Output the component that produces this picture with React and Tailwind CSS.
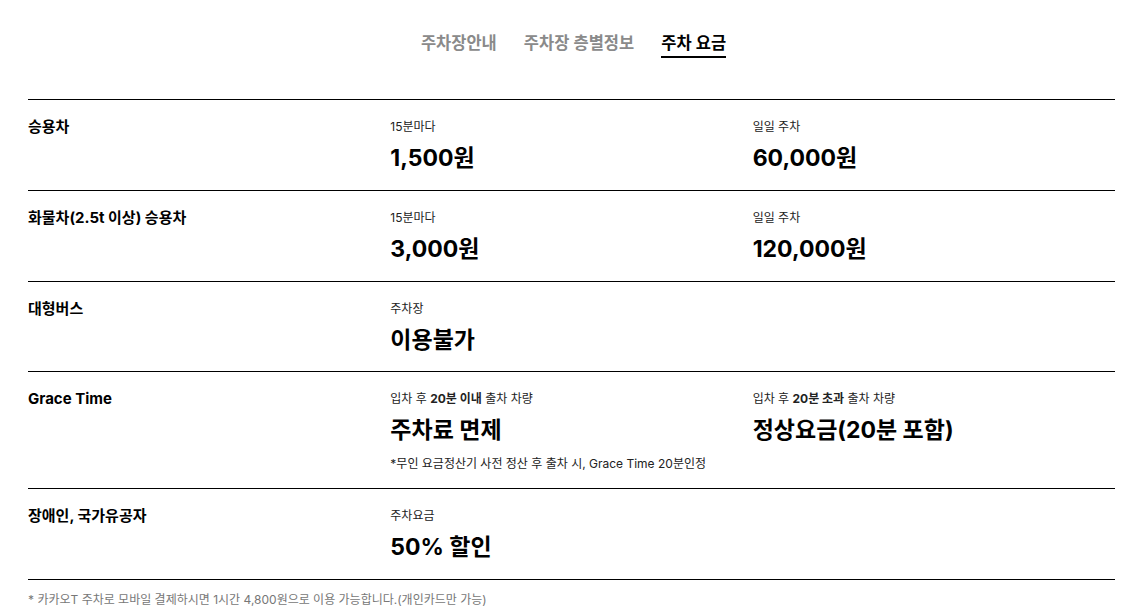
const rows = [
  {
    label: "승용차",
    cols: [
      { caption: "15분마다", value: "1,500원" },
      { caption: "일일 주차", value: "60,000원" },
    ],
  },
  {
    label: "화물차(2.5t 이상) 승용차",
    cols: [
      { caption: "15분마다", value: "3,000원" },
      { caption: "일일 주차", value: "120,000원" },
    ],
  },
  {
    label: "대형버스",
    cols: [{ caption: "주차장", value: "이용불가" }],
  },
  {
    label: "Grace Time",
    cols: [
      {
        caption: (
          <>
            입차 후 <b className="font-bold">20분 이내</b> 출차 차량
          </>
        ),
        value: "주차료 면제",
        note: "*무인 요금정산기 사전 정산 후 출차 시, Grace Time 20분인정",
      },
      {
        caption: (
          <>
            입차 후 <b className="font-bold">20분 초과</b> 출차 차량
          </>
        ),
        value: "정상요금(20분 포함)",
      },
    ],
  },
  {
    label: "장애인, 국가유공자",
    cols: [{ caption: "주차요금", value: "50% 할인" }],
  },
];

const tabs = ["주차장안내", "주차장 층별정보", "주차 요금"];

export default function App() {
  return (
    <div
      className="w-[1147px] min-h-[613px] bg-white text-black"
      style={{ fontFamily: 'Inter, "Noto Sans CJK KR", sans-serif' }}
    >
      <nav className="flex justify-center gap-[27px] pt-[30px]">
        {tabs.map((t, i) => (
          <div
            key={t}
            className={
              i === 2
                ? "text-[16.5px] font-semibold leading-[26px] text-black border-b-2 border-black"
                : "text-[16.5px] font-semibold leading-[26px] text-[#8a8a8a]"
            }
          >
            {t}
          </div>
        ))}
      </nav>

      <div className="ml-[28px] w-[1087px] mt-[41px]">
        {rows.map((row) => (
          <div key={row.label} className="grid grid-cols-3 border-t border-black pt-[18px] pb-[16.8px]">
            <div className="text-[15px] font-bold leading-[18px]">{row.label}</div>
            {row.cols.map((c, i) => (
              <div key={i}>
                <div className="text-[12px] leading-[18px] text-[#222]">{c.caption}</div>
                <div className="mt-[7px] text-[23px] font-bold leading-[30px]">{c.value}</div>
                {c.note && (
                  <div className="mt-[10px] -mb-[2px] text-[12px] leading-[18px] text-[#222]">{c.note}</div>
                )}
              </div>
            ))}
          </div>
        ))}
        <div className="border-t border-black pt-[11px] text-[12px] leading-[18px] text-[#777]">
          * 카카오T 주차로 모바일 결제하시면 1시간 4,800원으로 이용 가능합니다.(개인카드만 가능)
        </div>
      </div>
    </div>
  );
}
